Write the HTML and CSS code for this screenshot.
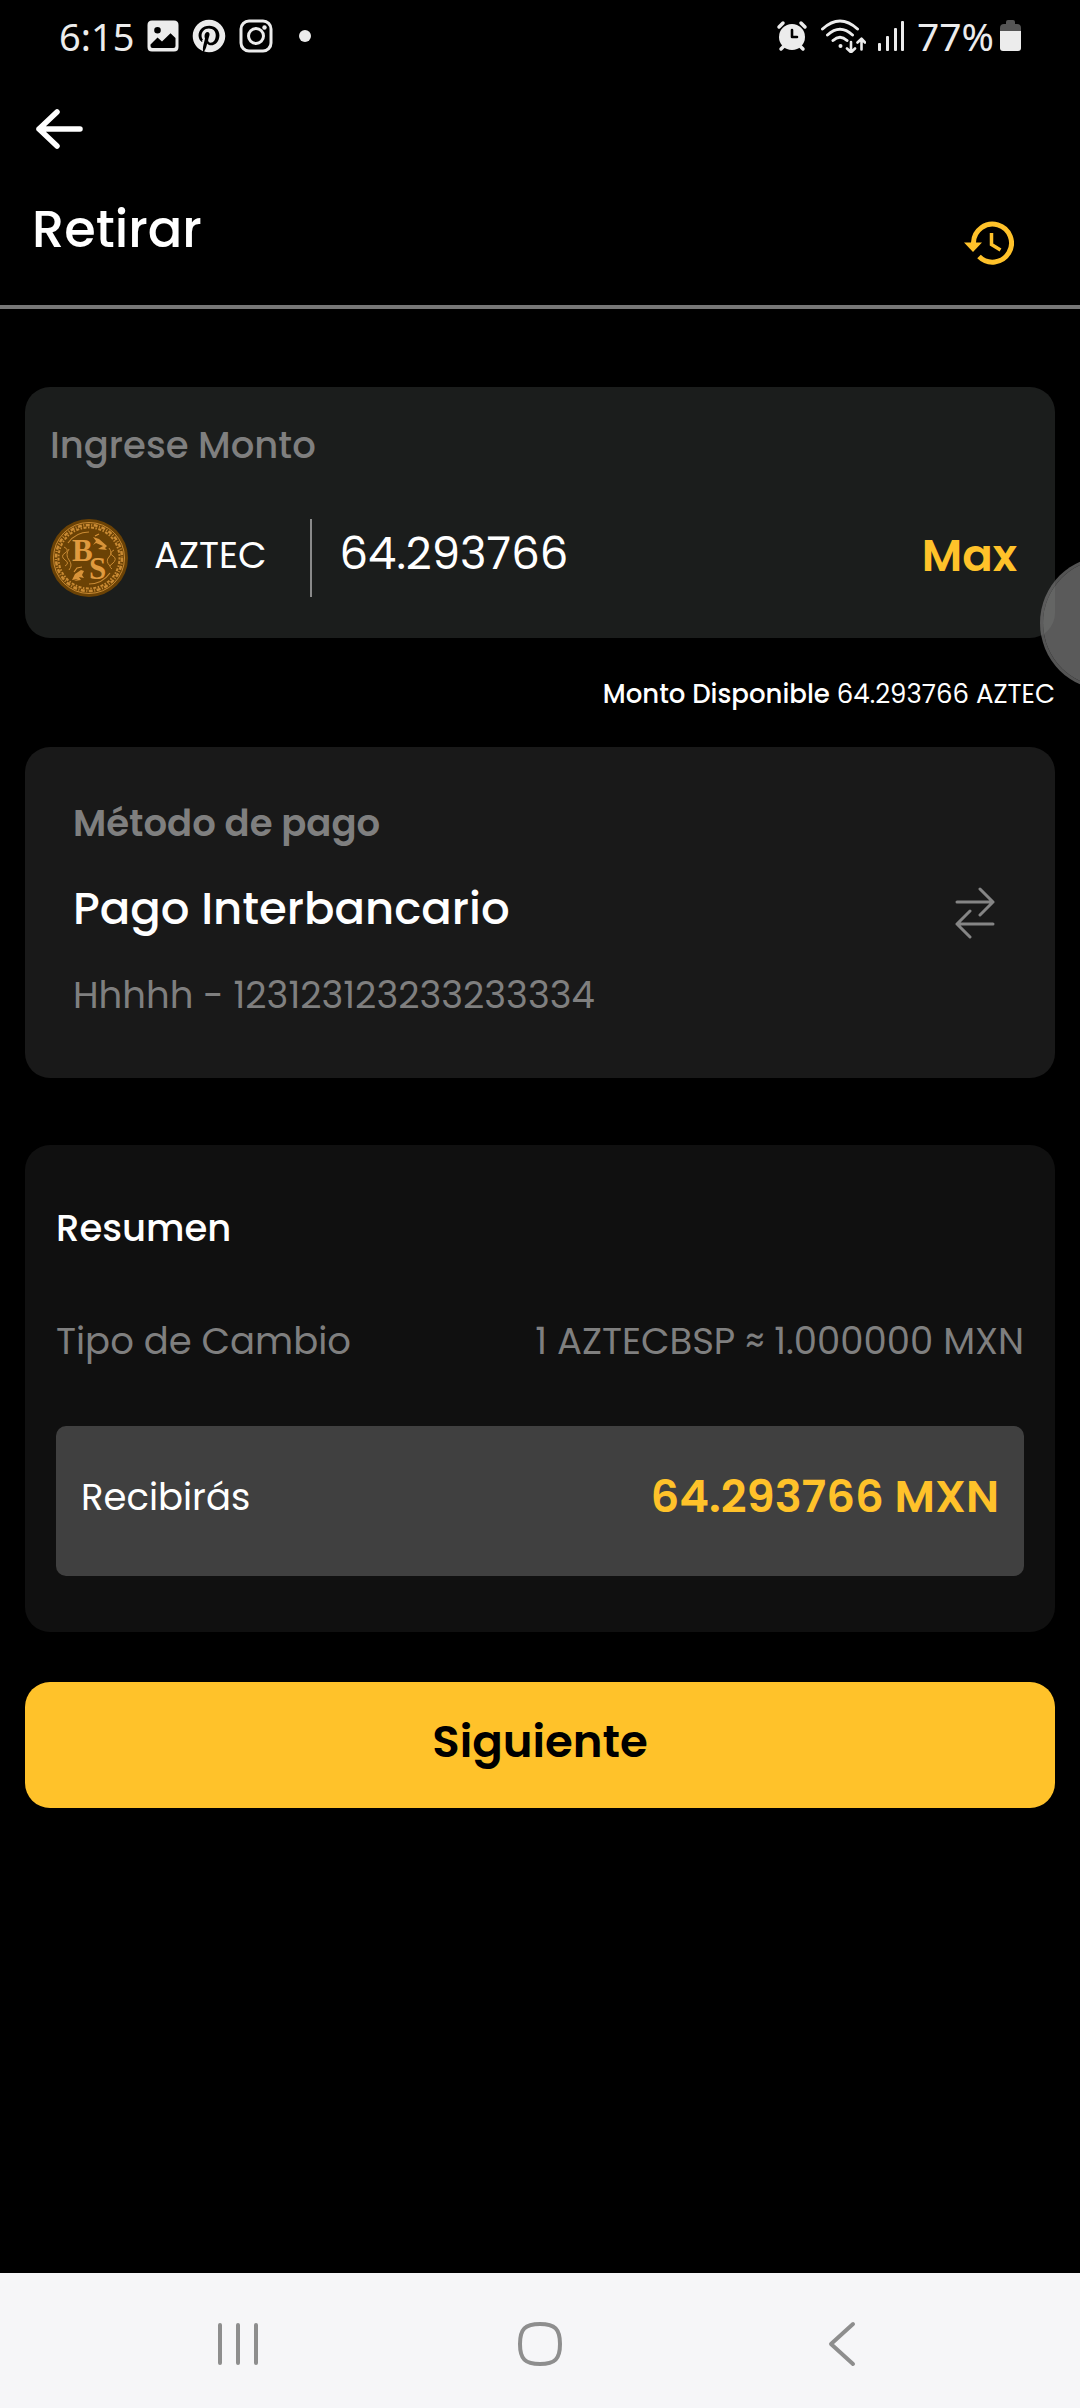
FILE: index.html
```html
<!DOCTYPE html>
<html lang="es">
<head>
  <meta charset="utf-8">
  <meta name="viewport" content="width=device-width, initial-scale=1">
  <title>Retirar</title>
  <link rel="stylesheet" href="styles.css">
</head>
<body>
<div class="screen">
  <div class="status">
    <div class="status-group">
      <span class="clock">6:15</span>
      <svg class="status-icon" width="32" height="32" viewBox="0 0 32 32" aria-hidden="true">
        <path fill="#ececec" fill-rule="evenodd" d="M5 0.500H27Q31.500 0.500 31.500 5V27Q31.500 31.500 27 31.500H5Q0.500 31.500 0.500 27V5Q0.500 0.500 5 0.500ZM10.500 7A3.300 3.300 0 1 0 10.500 13.600A3.300 3.300 0 1 0 10.500 7ZM3.500 24.500V26Q3.500 28 5.500 28H26.500Q28.500 28 28.500 26V18L23.500 13.200L15 21.500L10.500 17.500Z"/>
      </svg>
      <svg class="status-icon" width="34" height="34" viewBox="0 0 24 24" aria-hidden="true">
        <path fill="#ececec" d="M12 .5C5.650.5.500 5.650.500 12c0 4.870 3.030 9.030 7.310 10.710-.1-.91-.19-2.310.04-3.300.21-.9 1.350-5.730 1.350-5.730s-.35-.69-.35-1.710c0-1.600.93-2.790 2.080-2.790.98 0 1.450.74 1.450 1.620 0 .99-.63 2.460-.95 3.830-.27 1.150.57 2.080 1.710 2.080 2.050 0 3.620-2.160 3.620-5.280 0-2.760-1.980-4.690-4.820-4.690-3.280 0-5.210 2.460-5.210 5.010 0 .99.38 2.050.86 2.630.09.11.11.21.08.33-.9.36-.28 1.150-.32 1.310-.5.21-.17.26-.39.16-1.440-.67-2.340-2.780-2.340-4.470 0-3.640 2.640-6.980 7.620-6.980 4 0 7.110 2.850 7.110 6.660 0 3.970-2.510 7.170-5.980 7.170-1.170 0-2.270-.61-2.640-1.330l-.72 2.740c-.26 1-.96 2.260-1.430 3.020 1.080.33 2.220.51 3.410.51 6.350 0 11.500-5.150 11.500-11.500S18.350.5 12 .5Z"/>
      </svg>
      <svg class="status-icon" width="34" height="34" viewBox="0 0 34 34" fill="none" stroke="#ececec" stroke-width="3" aria-hidden="true">
        <rect x="2" y="2" width="30" height="30" rx="8"/><circle cx="17" cy="17" r="7.500"/><circle cx="25.500" cy="8.500" r="2.200" fill="#ececec" stroke="none"/>
      </svg>
      <span class="dot"></span>
    </div>
    <div class="status-group status-right">
      <svg width="32" height="32" viewBox="0 0 32 32" fill="none" stroke="#ececec" stroke-linecap="round" aria-hidden="true">
        <circle cx="16" cy="17" r="13" fill="#ececec" stroke="none"/>
        <path stroke-width="3.500" d="M3 7L7 3M29 7L25 3M5 29L9 25M27 29L23 25"/>
        <path stroke="#000" stroke-width="2.600" stroke-linejoin="round" d="M16 10V17H21"/>
      </svg>
      <svg width="46" height="34" viewBox="0 0 46 34" fill="none" stroke="#ececec" stroke-width="3" stroke-linecap="round" stroke-linejoin="round" aria-hidden="true">
        <path d="M2.500 10Q20 -6 37.500 10M7.500 16Q20 4.500 32.500 16M13 21.500Q20 15 27 21.500"/>
        <circle cx="20.500" cy="27" r="2" fill="#ececec" stroke="none"/>
        <path stroke-width="2.600" d="M31 23V33M27 29.500L31 33.300L35 29.500M41.500 30.500V20M37.500 23.500L41.500 19.700L45 23.500"/>
      </svg>
      <svg width="27" height="30" viewBox="0 0 27 30" fill="#ececec" aria-hidden="true">
        <rect x="0" y="22" width="3" height="8" rx="1"/><rect x="8" y="15" width="3" height="15" rx="1"/><rect x="16" y="7" width="3" height="23" rx="1"/><rect x="23" y="0" width="3" height="30" rx="1"/>
      </svg>
      <span class="battery-text">77%</span>
      <svg width="21" height="32" viewBox="0 0 21 32" aria-hidden="true">
        <path fill="#555" d="M6 2Q6 0 8 0H13Q15 0 15 2V4H17Q21 4 21 8V12H0V8Q0 4 4 4H6Z"/>
        <path fill="#ececec" d="M0 11H21V28Q21 31 18 31H3Q0 31 0 28Z"/>
      </svg>
    </div>
  </div>

  <header class="header">
    <button class="icon-button" type="button" aria-label="Volver">
      <svg width="48" height="44" viewBox="0 0 48 44" fill="none" stroke="#fff" stroke-width="5.500" stroke-linecap="round" stroke-linejoin="round" aria-hidden="true">
        <path d="M45 22H4M22 5L4 22L22 39"/>
      </svg>
    </button>
    <div class="header-row">
      <h1 class="title">Retirar</h1>
      <button class="icon-button history" type="button" aria-label="Historial">
        <svg width="50" height="44" viewBox="0 0 50 44" fill="none" stroke="#ffc22a" stroke-width="5" aria-hidden="true">
          <path d="M9.500 24V21.500A19 19 0 1 1 15 35.500"/>
          <path fill="#ffc22a" stroke="none" d="M0 21.500H18L9 31Z"/>
          <path stroke-width="3.500" d="M27.500 12V23.500L36.500 29"/>
        </svg>
      </button>
    </div>
  </header>

  <main class="content">
    <section class="card amount-card">
      <label class="caption" for="amount">Ingrese Monto</label>
      <div class="amount-row">
        <svg class="coin" width="78" height="78" viewBox="0 0 78 78" aria-hidden="true">
          <circle cx="39" cy="39" r="39" fill="#6b4205"/>
          <g fill="none" stroke="#c98a33">
            <circle cx="39" cy="39" r="35.500" stroke-width="1"/>
            <circle cx="39" cy="39" r="33" stroke-width="2.500" stroke-dasharray="4 1.500 1 1.500"/>
            <circle cx="39" cy="39" r="30.500" stroke-width="2" stroke-dasharray="1.500 1.500 3 1.500"/>
            <path stroke-width="1.200" d="M18 24A26 26 0 0 1 39 13M60 54A26 26 0 0 1 39 65"/>
            <path stroke-width="1" d="M14 28Q20 31 15 34T15 41Q20 44 15 47M19 30Q15 36 19 41T19 51M64 31Q58 34 63 37T62 45Q58 47 62 50M59 29Q63 34 59 38T60 47"/>
          </g>
          <path fill="#d99338" d="M43 18L49 20L57 27L55 29L57 31L48 30L53 27L46 24L43 26L46 22ZM22 61L25 55L31 51L34 52L32 56L34 59L29 58L31 61L24 62L28 60Z"/>
          <path fill="none" stroke="#d99338" stroke-width="1.200" d="M45 17L49 15M24 53L27 49L32 48"/>
          <text class="coin-letter" x="22" y="42">B</text>
          <text class="coin-letter" x="39" y="60">S</text>
        </svg>
        <span class="currency">AZTEC</span>
        <input class="amount-input" id="amount" type="text" inputmode="decimal" value="64.293766">
        <button class="max" type="button">Max</button>
      </div>
    </section>
    <p class="available"><strong>Monto Disponible</strong> 64.293766 AZTEC</p>

    <section class="card method-card">
      <div class="method-text">
        <h2 class="method-caption">Método de pago</h2>
        <p class="method-name">Pago Interbancario</p>
        <p class="muted">Hhhhh - 123123123233233334</p>
      </div>
      <button class="icon-button" type="button" aria-label="Cambiar método de pago">
        <svg width="42" height="52" viewBox="0 0 42 52" fill="none" stroke="#858585" stroke-width="3" stroke-linecap="round" stroke-linejoin="round" aria-hidden="true">
          <path d="M3 15H39M26 2L39 15L26 28M39 37H3M16 24L3 37L16 50"/>
        </svg>
      </button>
    </section>

    <section class="card summary-card">
      <h2 class="summary-title">Resumen</h2>
      <div class="line muted"><span>Tipo de Cambio</span><span>1 AZTECBSP ≈ 1.000000 MXN</span></div>
      <div class="line receive"><span>Recibirás</span><strong class="total">64.293766 MXN</strong></div>
    </section>

    <button class="next" type="button">Siguiente</button>
  </main>

  <nav class="system-nav" aria-label="Sistema">
    <button class="nav-button" type="button" aria-label="Recientes">
      <svg width="44" height="44" viewBox="0 0 44 44" stroke="#8e8e8e" stroke-width="4" stroke-linecap="round" aria-hidden="true"><path d="M4 3V41M22 3V41M40 3V41"/></svg>
    </button>
    <button class="nav-button" type="button" aria-label="Inicio">
      <svg width="46" height="46" viewBox="0 0 46 46" fill="none" stroke="#8e8e8e" stroke-width="4" aria-hidden="true"><path d="M23 3C38 3 43 8 43 23S38 43 23 43S3 38 3 23S8 3 23 3Z"/></svg>
    </button>
    <button class="nav-button" type="button" aria-label="Atrás">
      <svg width="46" height="46" viewBox="0 0 46 46" fill="none" stroke="#8e8e8e" stroke-width="4" stroke-linecap="round" stroke-linejoin="round" aria-hidden="true"><path d="M34 3L12 23L34 43"/></svg>
    </button>
  </nav>
  <div class="assist-bubble"></div>
</div>
</body>
</html>
```
FILE: styles.css
```css
* { box-sizing: border-box; }

body {
  margin: 0;
  background: #000;
  color: #fff;
  font-family: Poppins, Inter, sans-serif;
  font-size: 37px;
  line-height: 56px;
}

h1, h2, p { margin: 0; font-size: inherit; font-weight: 500; }

button {
  margin: 0;
  padding: 0;
  border: 0;
  background: none;
  color: inherit;
  font: inherit;
}

svg { display: block; flex: none; }

.screen {
  position: relative;
  display: flex;
  flex-direction: column;
  min-height: 100vh;
  overflow: hidden;
}

.status {
  display: flex;
  justify-content: space-between;
  height: 72px;
  padding: 0 59px;
  color: #ececec;
  font-family: "Noto Sans", sans-serif;
  font-size: 38px;
}

.status-group { display: flex; align-items: center; gap: 13px; }
.status-right { gap: 12px; font-size: 39px; }
.battery-text { margin-right: -6px; }

.dot {
  width: 12px;
  height: 12px;
  margin-left: 13px;
  border-radius: 50%;
  background: #ececec;
}

.header {
  padding: 25px 32px 30px;
  border-bottom: 4px solid #777;
}

.icon-button {
  display: flex;
  align-items: center;
  justify-content: center;
  height: 64px;
  padding: 0 3px;
}

.header-row {
  display: flex;
  justify-content: space-between;
  align-items: flex-end;
  height: 114px;
}

.title { padding-bottom: 16px; font-size: 51px; line-height: 60px; }
.header .history { padding-right: 34px; }

.content { flex: 1; padding: 78px 25px 50px; }
.card { border-radius: 25px; }

.amount-card { padding: 36px 38px 41px 25px; background: #1b1d1c; }
.caption { display: block; color: #7f7f7f; font-weight: 500; line-height: 44px; }

.amount-row {
  display: flex;
  align-items: center;
  height: 78px;
  margin-top: 52px;
}

.coin-letter {
  fill: #e09a3e;
  font-family: "Liberation Serif", serif;
  font-size: 31px;
  font-weight: 700;
}

.currency { padding: 0 43px 6px 26px; line-height: 72px; }

.amount-input {
  flex: 1;
  min-width: 0;
  height: 78px;
  padding: 0 28px 8px;
  border: 0;
  border-left: 2px solid #8a8a8a;
  background: none;
  color: #fff;
  font: inherit;
  font-size: 45px;
}

.max { padding-bottom: 4px; color: #ffc22a; font-size: 45px; font-weight: 600; }

.available {
  padding: 36px 0 33px;
  font-size: 26px;
  font-weight: 400;
  line-height: 40px;
  text-align: right;
}

.available strong { font-weight: 500; }

.method-card {
  display: flex;
  align-items: center;
  justify-content: space-between;
  padding: 48px 56px 55px 48px;
  background: #191919;
}

.method-card .icon-button { padding-top: 8px; }
.method-text { display: grid; gap: 30px; }
.method-caption { color: #7f7f7f; font-weight: 600; }
.method-name { font-size: 45px; }
.muted { color: #7f7f7f; font-weight: 400; }

.summary-card {
  display: grid;
  gap: 57px;
  margin-top: 67px;
  padding: 55px 31px 56px;
  background: #101010;
}

.line { display: flex; justify-content: space-between; }

.receive {
  padding: 43px 25px 51px;
  border-radius: 10px;
  background: #404040;
}

.total { color: #ffc22a; font-size: 45px; font-weight: 600; }

.next {
  display: block;
  width: 100%;
  height: 126px;
  margin-top: 50px;
  padding-bottom: 6px;
  border-radius: 25px;
  background: #ffc22a;
  color: #000;
  font-size: 45px;
  font-weight: 600;
}

.system-nav {
  display: flex;
  justify-content: center;
  align-items: center;
  gap: 182px;
  height: 135px;
  padding: 6px 0 0;
  background: #f6f6f8;
}

.nav-button { display: flex; justify-content: center; width: 120px; }

.assist-bubble {
  position: absolute;
  top: 556px;
  right: -94px;
  width: 134px;
  height: 134px;
  border: 3px solid rgba(120, 120, 120, 0.7);
  border-radius: 50%;
  background: rgba(145, 145, 145, 0.62);
  background-clip: padding-box;
}
```
